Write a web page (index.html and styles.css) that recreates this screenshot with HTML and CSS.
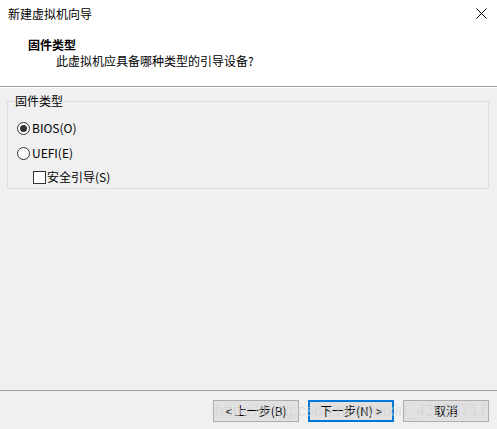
FILE: index.html
```html
<!DOCTYPE html>
<html lang="zh-CN">
<head>
<meta charset="utf-8">
<title>新建虚拟机向导</title>
<link rel="stylesheet" href="styles.css">
</head>
<body>
<div class="window">
  <header class="header">
    <div class="titlebar">
      <span class="title">新建虚拟机向导</span>
      <svg class="close" width="11" height="11" viewBox="0 0 11 11"><path d="M0.5 0.5 L10.5 10.5 M10.5 0.5 L0.5 10.5" stroke="#000" stroke-width="1" fill="none"/></svg>
    </div>
    <div class="heading">
      <div class="heading-title">固件类型</div>
      <div class="heading-sub">此虚拟机应具备哪种类型的引导设备?</div>
    </div>
  </header>
  <main class="content">
    <fieldset class="group">
      <legend class="legend">固件类型</legend>
      <div class="row"><span class="radio checked"></span><span class="label">BIOS(O)</span></div>
      <div class="row"><span class="radio"></span><span class="label">UEFI(E)</span></div>
      <div class="row indent"><span class="check"></span><span class="label">安全引导(S)</span></div>
    </fieldset>
  </main>
  <footer class="footer">
    <button class="btn">&lt; 上一步(B)</button>
    <button class="btn primary">下一步(N) &gt;</button>
    <button class="btn">取消</button>
    <span class="watermark">https://blog.csdn.net/weixin_43826717</span>
  </footer>
</div>
</body>
</html>
```
FILE: styles.css
```css
* { box-sizing: border-box; }
html, body { margin: 0; padding: 0; }
body {
  background: #f0f0f0;
  font-family: "Noto Sans CJK SC", "Noto Sans", sans-serif;
  font-size: 12px;
  color: #000;
}
.window {
  width: 497px;
  height: 429px;
  display: flex;
  flex-direction: column;
}
.header {
  background: #fff;
  height: 87px;
  border-bottom: 1px solid #a0a0a0;
  box-shadow: 0 1px 0 #ffffff;
}
.titlebar {
  height: 28px;
  display: flex;
  align-items: flex-start;
  justify-content: space-between;
  padding: 6px 10px 0 8px;
  line-height: 16px;
}
.close { margin-top: 2px; }
.heading {
  padding-top: 9px;
  line-height: 16px;
}
.heading-title {
  font-weight: bold;
  padding-left: 28px;
}
.heading-sub {
  padding-left: 56px;
}
.content {
  flex: 1;
  padding: 6px 8px 0 7px;
}
.group {
  margin: 0;
  border: 1px solid #dcdcdc;
  padding: 7px 0 0 7px;
  min-width: 0;
}
.legend {
  padding: 0 1px 0 0;
  line-height: 16px;
}
.row {
  height: 24px;
  display: flex;
  align-items: center;
  margin-bottom: 1px;
  line-height: 16px;
  padding-left: 2px;
}
.row:last-child {
  height: 22px;
  margin-bottom: 0;
}
.row.indent { padding-left: 18px; }
.radio {
  width: 13px;
  height: 13px;
  border: 1px solid #333;
  border-radius: 50%;
  background: #fff;
  display: flex;
  align-items: center;
  justify-content: center;
  margin-right: 2px;
}
.radio.checked::after {
  content: "";
  width: 7px;
  height: 7px;
  border-radius: 50%;
  background: #333;
}
.check {
  width: 13px;
  height: 13px;
  border: 1px solid #333;
  background: #fff;
  margin-right: 1px;
}
.footer {
  position: relative;
  height: 39px;
  border-top: 1px solid #a0a0a0;
  display: flex;
  justify-content: flex-end;
  gap: 9px;
  padding: 9px 8px 0 0;
}
.btn {
  width: 86px;
  height: 22px;
  background: #e1e1e1;
  border: 1px solid #adadad;
  font-family: "Noto Sans CJK SC", "Noto Sans", sans-serif;
  font-size: 12px;
  color: #000;
  padding: 0;
  line-height: 18px;
}
.btn.primary {
  border: 2px solid #0078d7;
}
.watermark {
  position: absolute;
  left: 215px;
  top: 9px;
  font-family: "Liberation Sans", Arial, sans-serif;
  font-size: 16px;
  line-height: 22px;
  color: rgba(210, 210, 210, 0.65);
  pointer-events: none;
  white-space: nowrap;
}
```
